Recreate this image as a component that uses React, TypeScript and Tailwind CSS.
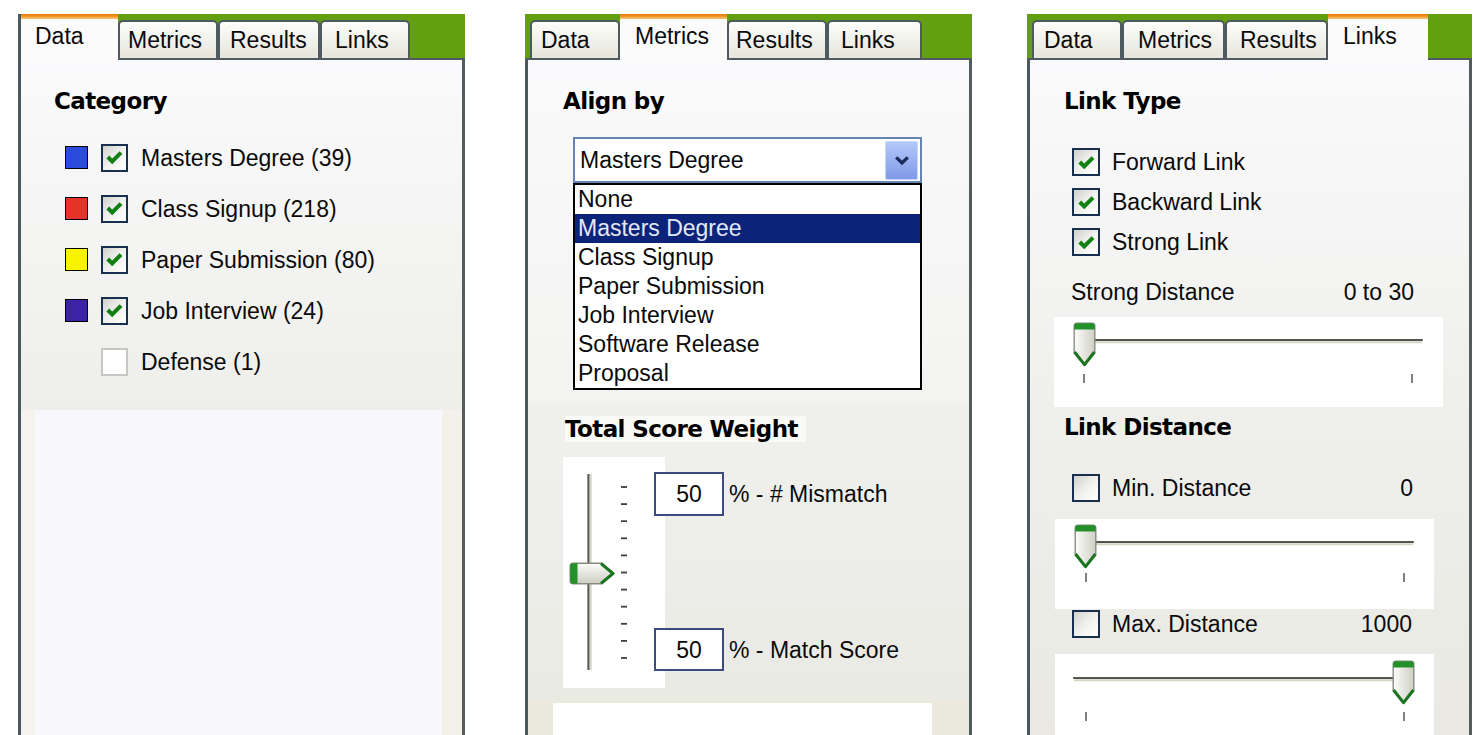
import React from "react";

type TabDef = { label: string; cls: string; pad: string };

const sans = "font-['Liberation_Sans',Arial,sans-serif] text-[23px] text-[#0a0a0a]";
const head =
  "font-['DejaVu_Sans',Verdana,sans-serif] text-[23px] font-bold tracking-[-0.6px] h-[26px] leading-[26px] text-black whitespace-nowrap";

/* ================= TABS ================= */

function TabStrip({ tabs, selected, lead }: { tabs: TabDef[]; selected: number; lead: boolean }) {
  return (
    <div className="flex h-[46px] shrink-0 items-end bg-[#62a00f]">
      {lead && <div className="w-[5px] self-stretch border-b-2 border-[#4f5a60]" />}
      {tabs.map((t, i) =>
        i === selected ? (
          <div
            key={t.label}
            className={`relative z-10 -mb-[2px] flex h-[48px] shrink-0 flex-col bg-[#fbfbfc] ${t.cls}`}
          >
            <div className="h-[5px] bg-gradient-to-b from-[#e27806] via-[#ef9a2a] to-[#f8c77a]" />
            <div className={`mt-[4px] h-[26px] leading-[26px] ${t.pad}`}>{t.label}</div>
          </div>
        ) : (
          <div
            key={t.label}
            className={`flex h-[40px] shrink-0 items-center rounded-t-[5px] border-2 border-[#4f5a60] bg-gradient-to-b from-[#fdfdfb] to-[#e6e5dc] ${t.cls} ${t.pad}`}
          >
            <span className="h-[26px] leading-[26px]">{t.label}</span>
          </div>
        )
      )}
      <div className="flex-1 self-stretch border-b-2 border-[#4f5a60]" />
    </div>
  );
}

/* ================= SMALL CONTROLS ================= */

function CheckMark() {
  return (
    <svg width="17" height="15" viewBox="0 0 17 15">
      <path d="M1.8 7 L6.2 11.4 L15 2.6" fill="none" stroke="#127f12" strokeWidth="4" />
    </svg>
  );
}

function CheckBox({ checked, light, size }: { checked: boolean; light?: boolean; size: string }) {
  return (
    <div
      className={`flex shrink-0 items-center justify-center border-2 ${size} ${
        light
          ? "border-[#c6c6c2] bg-white"
          : "border-[#17304f] bg-gradient-to-br from-[#d2d2cc] via-[#f0f0ed] to-white"
      }`}
    >
      {checked && <CheckMark />}
    </div>
  );
}

function Swatch({ color }: { color: string }) {
  return <div className={`h-[23px] w-[23px] shrink-0 border-[1.5px] border-black ${color}`} />;
}

function DownThumb({ x, y, id }: { x: number; y: number; id: string }) {
  return (
    <g transform={`translate(${x} ${y})`}>
      <path
        d="M1.2 4 Q1.2 1.2 4 1.2 H19 Q21.8 1.2 21.8 4 V31 L11.5 43.5 L1.2 31 Z"
        fill={`url(#${id})`}
        stroke="#858c82"
        strokeWidth="1.4"
      />
      <path d="M1.2 4 Q1.2 1.2 4 1.2 H19 Q21.8 1.2 21.8 4 V7.5 H1.2 Z" fill="#24902a" />
      <path d="M1.6 30 L11.5 42.6 L21.4 30" fill="none" stroke="#1a7420" strokeWidth="3" strokeLinejoin="round" />
    </g>
  );
}

function HSlider({
  box,
  w,
  h,
  trackY,
  x1,
  x2,
  thumbX,
  thumbY,
  ticks,
  tickY,
  id,
}: {
  box: string;
  w: number;
  h: number;
  trackY: number;
  x1: number;
  x2: number;
  thumbX: number;
  thumbY: number;
  ticks: number[];
  tickY: number;
  id: string;
}) {
  return (
    <div className={`shrink-0 bg-white ${box}`}>
      <svg width={w} height={h}>
        <defs>
          <linearGradient id={id} x1="0" y1="0" x2="1" y2="0">
            <stop offset="0" stopColor="#fcfcfa" />
            <stop offset="1" stopColor="#cfcfc5" />
          </linearGradient>
        </defs>
        <line x1={x1} y1={trackY} x2={x2} y2={trackY} stroke="#55554f" strokeWidth="2.2" strokeLinecap="round" />
        <line x1={x1} y1={trackY + 2.2} x2={x2} y2={trackY + 2.2} stroke="#d8d4c4" strokeWidth="2" />
        {ticks.map((t) => (
          <line key={t} x1={t} y1={tickY} x2={t} y2={tickY + 9} stroke="#4a4a4a" strokeWidth="1.4" />
        ))}
        <DownThumb x={thumbX} y={thumbY} id={id} />
      </svg>
    </div>
  );
}

function VSlider() {
  const ticks = Array.from({ length: 11 }, (_, i) => 30 + i * 17.1);
  return (
    <div className="h-[231px] w-[102px] shrink-0 bg-white">
      <svg width="102" height="231">
        <defs>
          <linearGradient id="vthumb" x1="0" y1="0" x2="0" y2="1">
            <stop offset="0" stopColor="#fcfcfa" />
            <stop offset="1" stopColor="#cdcdc3" />
          </linearGradient>
        </defs>
        <line x1="25.5" y1="17" x2="25.5" y2="213" stroke="#55554f" strokeWidth="2.2" />
        <line x1="27.7" y1="17" x2="27.7" y2="213" stroke="#d6d3c6" strokeWidth="2" />
        {ticks.map((y) => (
          <line key={y} x1="58" y1={y} x2="64" y2={y} stroke="#3d3d3d" strokeWidth="1.8" />
        ))}
        <g transform="translate(6 105)">
          <path
            d="M4 1.2 H33 L44.8 11.5 L33 21.8 H4 Q1.2 21.8 1.2 19 V4 Q1.2 1.2 4 1.2 Z"
            fill="url(#vthumb)"
            stroke="#858c82"
            strokeWidth="1.4"
          />
          <path d="M4 1.2 H8.5 V21.8 H4 Q1.2 21.8 1.2 19 V4 Q1.2 1.2 4 1.2 Z" fill="#24902a" />
          <path d="M32 1.6 L44 11.5 L32 21.4" fill="none" stroke="#1a7420" strokeWidth="3" strokeLinejoin="round" />
        </g>
      </svg>
    </div>
  );
}

/* ================= PANELS ================= */

const categories = [
  { name: "Masters Degree (39)", color: "bg-[#2a4bdc]", checked: true },
  { name: "Class Signup (218)", color: "bg-[#e6332a]", checked: true },
  { name: "Paper Submission (80)", color: "bg-[#f8f400]", checked: true },
  { name: "Job Interview (24)", color: "bg-[#3b22a6]", checked: true },
  { name: "Defense (1)", color: "", checked: false },
];

const alignOptions = [
  "None",
  "Masters Degree",
  "Class Signup",
  "Paper Submission",
  "Job Interview",
  "Software Release",
  "Proposal",
];

function DataPanel() {
  return (
    <div className="ml-[18px] flex h-[740px] w-[447px] shrink-0 flex-col">
      <TabStrip
        lead={false}
        selected={0}
        tabs={[
          { label: "Data", cls: "w-[100px] border-l-[3px] border-[#4a5960]", pad: "pl-[14px]" },
          { label: "Metrics", cls: "w-[100px]", pad: "pl-[8px]" },
          { label: "Results", cls: "w-[102px]", pad: "pl-[10px]" },
          { label: "Links", cls: "w-[90px]", pad: "pl-[13px]" },
        ]}
      />
      <div className="flex flex-1 flex-col border-x-[3px] border-l-[#4a5960] border-r-[#525c5c]">
        <div className="h-[350px] bg-gradient-to-b from-[#fafafc] to-[#eeeeea] pt-[28px]">
          <h3 className={`ml-[33px] ${head}`}>Category</h3>
          <div className="mt-[18px]">
            {categories.map((c) => (
              <div key={c.name} className="ml-[44px] flex h-[51px] items-center">
                {c.color ? <Swatch color={c.color} /> : <div className="w-[23px] shrink-0" />}
                <div className="ml-[13px]">
                  <CheckBox checked={c.checked} light={!c.checked} size="h-[28px] w-[27px]" />
                </div>
                <span className="ml-[13px] h-[26px] leading-[26px] whitespace-nowrap">{c.name}</span>
              </div>
            ))}
          </div>
        </div>
        <div className="flex-1 border-l-[14px] border-r-[20px] border-l-[#f6f3ef] border-r-[#f3f1ea] bg-[#f8f8fc]" />
      </div>
    </div>
  );
}

function MetricsPanel() {
  return (
    <div className="ml-[60px] flex h-[740px] w-[447px] shrink-0 flex-col">
      <TabStrip
        lead
        selected={1}
        tabs={[
          { label: "Data", cls: "w-[90px]", pad: "pl-[9px]" },
          { label: "Metrics", cls: "w-[107px]", pad: "pl-[15px]" },
          { label: "Results", cls: "w-[100px]", pad: "pl-[7px]" },
          { label: "Links", cls: "w-[95px]", pad: "pl-[12px]" },
        ]}
      />
      <div className="flex flex-1 flex-col border-x-[3px] border-l-[#4a5960] border-r-[#525c5c]">
        <div className="h-[342px] bg-gradient-to-b from-[#fafafc] to-[#f3f3f1] pt-[28px]">
          <h3 className={`ml-[35px] ${head}`}>Align by</h3>
          <div className="ml-[45px] mt-[23px] w-[349px]">
            <div className="flex h-[46px] items-center justify-between border-2 border-[#6584b0] bg-white pl-[5px] pr-[2px]">
              <span className="h-[26px] leading-[26px]">Masters Degree</span>
              <div className="flex h-[39px] w-[33px] items-center justify-center rounded-[2px] border border-[#c6d5fb] bg-gradient-to-b from-[#b4c8f8] to-[#8099e8]">
                <svg width="16" height="11" viewBox="0 0 16 11">
                  <path d="M2.2 2.4 L8 8 L13.8 2.4" fill="none" stroke="#1c2b5a" strokeWidth="3.4" />
                </svg>
              </div>
            </div>
            <div className="relative z-10 border-2 border-black bg-white">
              {alignOptions.map((o) => (
                <div
                  key={o}
                  className={`h-[29px] pl-[3px] leading-[29px] ${
                    o === "Masters Degree" ? "bg-[#0b2479] text-[#e4e8f4]" : ""
                  }`}
                >
                  {o}
                </div>
              ))}
            </div>
          </div>
        </div>
        <div className="h-[298px] bg-gradient-to-b from-[#f0f0ed] to-[#eaeae5] pt-[14px]">
          <h3 className={`ml-[37px] w-fit bg-[#f9f9f8] pr-[8px] ${head}`}>Total Score Weight</h3>
          <div className="ml-[35px] mt-[15px] flex">
            <VSlider />
            <div className="-ml-[11px] flex flex-col pt-[15px]">
              <div className="flex items-center">
                <div className="flex h-[44px] w-[70px] items-center justify-center border-2 border-[#3d4c7c] bg-white">
                  <span className="h-[26px] leading-[26px]">50</span>
                </div>
                <span className="ml-[5px] h-[26px] leading-[26px] whitespace-nowrap">% - # Mismatch</span>
              </div>
              <div className="mt-[112px] flex items-center">
                <div className="flex h-[43px] w-[70px] items-center justify-center border-2 border-[#3d4c7c] bg-white">
                  <span className="h-[26px] leading-[26px]">50</span>
                </div>
                <span className="ml-[5px] h-[26px] leading-[26px] whitespace-nowrap">% - Match Score</span>
              </div>
            </div>
          </div>
        </div>
        <div className="flex-1 bg-[#ebe8dc] pt-[3px]">
          <div className="ml-[25px] h-full w-[379px] bg-white" />
        </div>
      </div>
    </div>
  );
}

function LinksPanel() {
  const linkTypes = ["Forward Link", "Backward Link", "Strong Link"];
  return (
    <div className="ml-[55px] flex h-[740px] w-[445px] shrink-0 flex-col">
      <TabStrip
        lead
        selected={3}
        tabs={[
          { label: "Data", cls: "w-[90px]", pad: "pl-[10px]" },
          { label: "Metrics", cls: "w-[103px]", pad: "pl-[14px]" },
          { label: "Results", cls: "w-[103px]", pad: "pl-[13px]" },
          { label: "Links", cls: "w-[100px]", pad: "pl-[15px]" },
        ]}
      />
      <div className="flex-1 border-x-[3px] border-l-[#4a5960] border-r-[#525c5c] bg-gradient-to-b from-[#fafafc] via-[#efefec] to-[#e9e8e2] pt-[28px]">
        <h3 className={`ml-[34px] ${head}`}>Link Type</h3>
        <div className="mt-[28px]">
          {linkTypes.map((l) => (
            <div key={l} className="ml-[42px] flex h-[40px] items-center">
              <CheckBox checked size="h-[28px] w-[28px]" />
              <span className="ml-[12px] h-[26px] leading-[26px] whitespace-nowrap">{l}</span>
            </div>
          ))}
        </div>
        <div className="ml-[41px] mt-[15px] flex h-[30px] w-[343px] items-center justify-between">
          <span className="h-[26px] leading-[26px]">Strong Distance</span>
          <span className="h-[26px] leading-[26px]">0 to 30</span>
        </div>
        <div className="ml-[24px] mt-[10px]">
          <HSlider
            id="s1"
            box="h-[90px] w-[389px]"
            w={389}
            h={90}
            trackY={23}
            x1={26}
            x2={368}
            thumbX={19}
            thumbY={5}
            ticks={[30, 358]}
            tickY={57}
          />
        </div>
        <h3 className={`ml-[34px] mt-[7px] ${head}`}>Link Distance</h3>
        <div className="ml-[42px] mt-[33px] flex h-[30px] w-[341px] items-center justify-between">
          <div className="flex items-center">
            <CheckBox checked={false} size="h-[28px] w-[28px]" />
            <span className="ml-[12px] h-[26px] leading-[26px]">Min. Distance</span>
          </div>
          <span className="h-[26px] leading-[26px]">0</span>
        </div>
        <div className="ml-[25px] mt-[16px]">
          <HSlider
            id="s2"
            box="h-[90px] w-[379px]"
            w={379}
            h={90}
            trackY={23}
            x1={22}
            x2={358}
            thumbX={19}
            thumbY={5}
            ticks={[31, 349]}
            tickY={54}
          />
        </div>
        <div className="ml-[42px] flex h-[30px] w-[340px] items-center justify-between">
          <div className="flex items-center">
            <CheckBox checked={false} size="h-[28px] w-[28px]" />
            <span className="ml-[12px] h-[26px] leading-[26px]">Max. Distance</span>
          </div>
          <span className="h-[26px] leading-[26px]">1000</span>
        </div>
        <div className="ml-[25px] mt-[15px]">
          <HSlider
            id="s3"
            box="h-[90px] w-[379px]"
            w={379}
            h={90}
            trackY={24}
            x1={19}
            x2={345}
            thumbX={337}
            thumbY={6}
            ticks={[31, 349]}
            tickY={58}
          />
        </div>
      </div>
    </div>
  );
}

export default function App() {
  return (
    <div className={`flex h-[735px] w-[1483px] items-start overflow-hidden bg-white pt-[14px] ${sans}`}>
      <DataPanel />
      <MetricsPanel />
      <LinksPanel />
    </div>
  );
}
